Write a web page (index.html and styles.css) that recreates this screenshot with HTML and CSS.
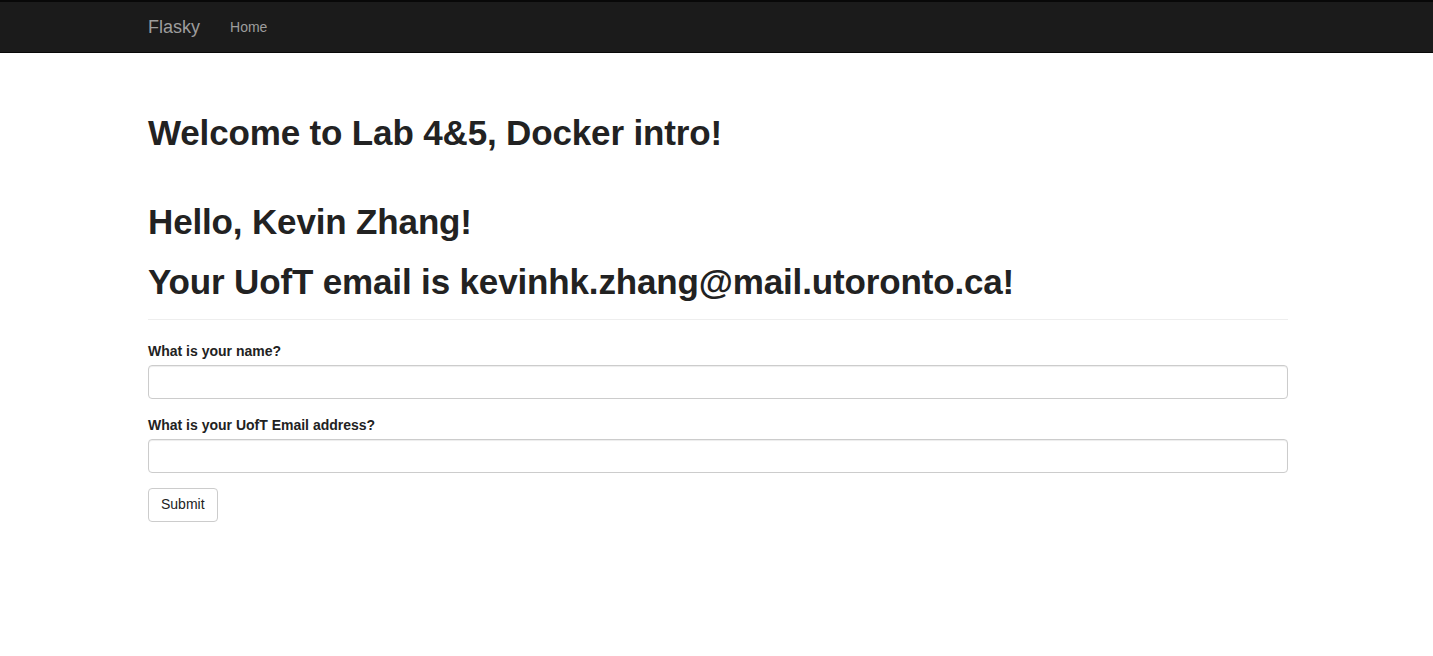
FILE: index.html
```html
<!DOCTYPE html>
<html lang="en">
<head>
<meta charset="utf-8">
<title>Flasky</title>
<link rel="stylesheet" href="styles.css">
</head>
<body>
<nav class="navbar">
  <div class="container nav-inner">
    <a class="brand" href="#">Flasky</a>
    <ul class="nav-links">
      <li><a href="#">Home</a></li>
    </ul>
  </div>
</nav>
<main class="container">
  <h1 class="title">Welcome to Lab 4&amp;5, Docker intro!</h1>
  <div class="page-header">
    <h1>Hello, Kevin Zhang!</h1>
    <h1>Your UofT email is kevinhk.zhang@mail.utoronto.ca!</h1>
  </div>
  <form class="form">
    <div class="form-group">
      <label for="name">What is your name?</label>
      <input id="name" class="form-control" type="text">
    </div>
    <div class="form-group">
      <label for="email">What is your UofT Email address?</label>
      <input id="email" class="form-control" type="text">
    </div>
    <button type="button" class="btn">Submit</button>
  </form>
</main>
</body>
</html>
```

FILE: styles.css
```css
* { box-sizing: border-box; }
html, body { margin: 0; padding: 0; }
body {
  font-family: "Liberation Sans", Arial, sans-serif;
  font-size: 14px;
  line-height: 1.42857;
  color: #333;
  background: #fff;
}
.container {
  width: 1170px;
  margin-left: calc(50% - 583.5px);
  padding: 0 15px;
}
.navbar {
  background: #1b1b1b;
  border-top: 2px solid #080808;
  border-bottom: 1px solid #080808;
  height: 53px;
  margin-bottom: 19px;
}
.nav-inner {
  display: flex;
  align-items: center;
  height: 50px;
}
.brand {
  color: #9d9d9d;
  font-size: 18px;
  line-height: 20px;
  padding: 15px;
  margin-left: -15px;
  text-decoration: none;
}
.nav-links {
  list-style: none;
  margin: 0;
  padding: 0;
  display: flex;
}
.nav-links a {
  display: block;
  color: #9d9d9d;
  font-size: 14px;
  line-height: 20px;
  padding: 15px;
  text-decoration: none;
}
h1 {
  font-size: 35px;
  letter-spacing: -0.15px;
  font-weight: bold;
  line-height: 40px;
  color: #222;
  margin: 0;
}
.title {
  padding-top: 41px;
}
.page-header {
  margin-top: 49px;
  padding-bottom: 17px;
  border-bottom: 1px solid #eee;
  display: flex;
  flex-direction: column;
  gap: 20px;
}
.form {
  margin-top: 20px;
}
.form-group {
  margin-bottom: 15px;
}
label {
  display: block;
  font-weight: bold;
  padding-top: 2px;
  margin-bottom: 3px;
  color: #222;
}
.form-control {
  display: block;
  width: 100%;
  height: 34px;
  padding: 6px 12px;
  font: inherit;
  border: 1px solid #ccc;
  border-radius: 4px;
  box-shadow: inset 0 1px 1px rgba(0,0,0,.075);
  background: #fff;
}
.btn {
  display: inline-block;
  height: 34px;
  padding: 6px 12px;
  font: inherit;
  color: #222;
  background: #fff;
  border: 1px solid #ccc;
  border-radius: 4px;
}
```
